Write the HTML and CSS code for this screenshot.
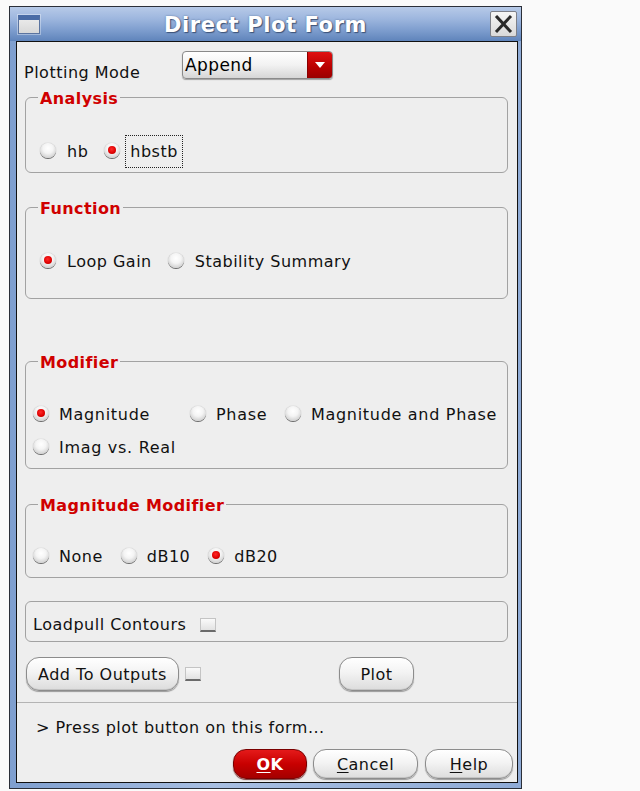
FILE: index.html
```html
<!DOCTYPE html>
<html>
<head>
<meta charset="utf-8">
<link rel="stylesheet" href="styles.css">
</head>
<body>
<div class="window">
  <div class="titlebar">
    <span class="win-icon"></span>
    <span class="title">Direct Plot Form</span>
    <span class="close"><svg width="25" height="24" viewBox="0 0 25 24"><path d="M6 5 L19 19 M19 5 L6 19" stroke="#2a2a2a" stroke-width="3" stroke-linecap="square" fill="none"/></svg></span>
  </div>
  <div class="content">
    <div class="mode-row">
      <span class="mode-label">Plotting Mode</span>
      <div class="select"><span class="select-text">Append</span><span class="select-arrow"></span></div>
    </div>

    <fieldset class="group g-analysis">
      <legend>Analysis</legend>
      <div class="row">
        <span class="opt"><span class="radio"></span><span class="lbl">hb</span></span>
        <span class="opt"><span class="radio on"></span><span class="lbl focus">hbstb</span></span>
      </div>
    </fieldset>

    <fieldset class="group g-function">
      <legend>Function</legend>
      <div class="row">
        <span class="opt"><span class="radio on"></span><span class="lbl">Loop Gain</span></span>
        <span class="opt"><span class="radio"></span><span class="lbl">Stability Summary</span></span>
      </div>
    </fieldset>

    <fieldset class="group g-modifier">
      <legend>Modifier</legend>
      <div class="grid">
        <span class="opt"><span class="radio on"></span><span class="lbl">Magnitude</span></span>
        <span class="opt"><span class="radio"></span><span class="lbl">Phase</span></span>
        <span class="opt"><span class="radio"></span><span class="lbl">Magnitude and Phase</span></span>
        <span class="opt"><span class="radio"></span><span class="lbl">Imag vs. Real</span></span>
      </div>
    </fieldset>

    <fieldset class="group g-magmod">
      <legend>Magnitude Modifier</legend>
      <div class="row tight">
        <span class="opt"><span class="radio"></span><span class="lbl">None</span></span>
        <span class="opt"><span class="radio"></span><span class="lbl">dB10</span></span>
        <span class="opt"><span class="radio on"></span><span class="lbl">dB20</span></span>
      </div>
    </fieldset>

    <div class="box loadpull">
      <span class="lbl">Loadpull Contours</span><span class="check"></span>
    </div>

    <div class="action-row">
      <span class="btn btn-add">Add To Outputs</span><span class="check small"></span>
      <span class="btn btn-plot">Plot</span>
    </div>

    <div class="separator"></div>

    <div class="status">&gt; Press plot button on this form...</div>

    <div class="footer">
      <span class="btn btn-ok"><u>O</u>K</span>
      <span class="btn btn-cancel"><u>C</u>ancel</span>
      <span class="btn btn-help"><u>H</u>elp</span>
    </div>
  </div>
</div>
</body>
</html>
```

FILE: styles.css
```css
html, body {
  margin: 0;
  padding: 0;
  background: #fafafa;
}
body {
  font-family: "DejaVu Sans", "Liberation Sans", sans-serif;
  font-size: 16px;
  color: #111;
}
.window {
  box-sizing: border-box;
  width: 513px;
  height: 783px;
  margin: 6px 0 0 9px;
  border: 1px solid #2b2f38;
  background: linear-gradient(90deg, #7f9fcf, #a8bfe2 40%, #8fabd6);
  display: flex;
  flex-direction: column;
}
.titlebar {
  height: 34px;
  flex: none;
  display: grid;
  grid-template-columns: 1fr auto 1fr;
  align-items: center;
  background: linear-gradient(180deg, #b7cae8 0%, #9db6de 35%, #7c9ccd 70%, #5f84bb 100%);
}
.win-icon {
  justify-self: start;
  margin-left: 8px;
  width: 22px;
  height: 19px;
  box-sizing: border-box;
  border: 1px solid #5b74a0;
  border-top: 5px solid #4a6ca6;
  background: linear-gradient(180deg, #e9e9e9, #d8d8d8);
  box-shadow: 0 0 0 1px rgba(255,255,255,0.35);
}
.title {
  font-weight: bold;
  font-size: 21px;
  letter-spacing: 0.6px;
  color: #fff;
  text-shadow: 1px 1px 1px #3c5277, 0 0 2px #5a739c;
  padding-top: 2px;
}
.close {
  justify-self: end;
  margin-right: 4px;
  width: 27px;
  height: 26px;
  box-sizing: border-box;
  border: 1px solid #7d8089;
  border-radius: 2px;
  background: linear-gradient(180deg, #f6f6f6, #d9d9d9);
  display: flex;
  align-items: center;
  justify-content: center;
}
.content {
  box-sizing: border-box;
  height: 742px;
  margin: 0 3px 0 6px;
  border: 1px solid #111;
  background: #eeeeee;
  display: flex;
  flex-direction: column;
}
.mode-row {
  display: flex;
  align-items: flex-start;
  padding: 9px 0 0 7px;
}
.mode-label {
  width: 158px;
  margin-top: 12px;
  letter-spacing: 0.5px;
  line-height: 19px;
}
.select {
  box-sizing: border-box;
  width: 151px;
  height: 28px;
  border: 1px solid #8a8a8a;
  border-radius: 4px;
  background: linear-gradient(180deg, #ffffff 0%, #f2f2f2 50%, #d6d6d6 100%);
  display: flex;
  align-items: stretch;
  overflow: hidden;
  box-shadow: 0 1px 1px #a0a0a0;
}
.select-text {
  flex: 1;
  padding-left: 2px;
  line-height: 27px;
  font-size: 17px;
  letter-spacing: 0.4px;
  color: #000;
}
.select-arrow {
  width: 24px;
  background: linear-gradient(180deg, #e01010, #b80000 60%, #9a0000);
  position: relative;
  border-left: 1px solid #8a0000;
}
.select-arrow::after {
  content: "";
  position: absolute;
  left: 7px;
  top: 10px;
  border-left: 5px solid transparent;
  border-right: 5px solid transparent;
  border-top: 6px solid #fff;
}
.group {
  box-sizing: border-box;
  width: 483px;
  margin: 0 0 0 8px;
  padding: 0;
  border: 1px solid #a2a2a2;
  border-radius: 6px;
  min-width: 0;
}
.group legend {
  margin-left: 12px;
  padding: 4px 2px 0;
  line-height: 18px;
  font-weight: bold;
  font-size: 16px;
  letter-spacing: 0.4px;
  color: #d00000;
}
.g-analysis { margin-top: 4px; padding: 28px 0 5px 0; }
.g-function { margin-top: 23px; padding: 33px 0 27px 0; }
.g-modifier { margin-top: 51px; padding: 32px 0 11px 0; }
.g-magmod { margin-top: 24px; padding: 31px 0 11px 0; }
.g-analysis .row, .g-function .row { padding-left: 14px; }
.g-modifier .grid, .g-magmod .row { padding-left: 7px; }

.row {
  display: flex;
  align-items: center;
  gap: 16px;
}
.row.tight { gap: 18px; }
.grid {
  display: grid;
  grid-template-columns: 157px 95px auto;
  row-gap: 13px;
}
.opt {
  display: flex;
  align-items: center;
  height: 20px;
}
.lbl {
  letter-spacing: 0.5px;
  line-height: 19px;
  white-space: nowrap;
}
.g-modifier .lbl { letter-spacing: 0.7px; }
.opt .radio + .lbl { margin-left: 10px; }
.g-analysis .opt .radio + .lbl, .g-function .opt .radio + .lbl { margin-left: 11px; }
.lbl.focus {
  margin-left: 5px !important;
  padding: 6px 4px;
  border: 1px dotted #222;
}
.g-analysis .opt { height: 31px; }
.radio {
  flex: none;
  width: 16px;
  height: 15px;
  border-radius: 50%;
  background: radial-gradient(circle at 50% 35%, #ffffff 0%, #f4f4f4 40%, #d2d2d2 75%, #a8a8a8 100%);
  box-shadow: 0 1px 0 #6a6a6a, 0 0 1px #999;
  position: relative;
  margin-top: -2px;
}
.radio.on::after {
  content: "";
  position: absolute;
  left: 4px;
  top: 3px;
  width: 8px;
  height: 8px;
  border-radius: 50%;
  background: radial-gradient(circle at 45% 40%, #ff2a2a 0%, #dd0000 60%, #a00000 100%);
}
.box {
  box-sizing: border-box;
  width: 483px;
  height: 41px;
  margin: 23px 0 0 8px;
  border: 1px solid #a2a2a2;
  border-radius: 6px;
  display: flex;
  align-items: center;
  padding: 6px 0 0 7px;
}
.check {
  display: inline-block;
  box-sizing: border-box;
  width: 16px;
  height: 14px;
  margin-left: 14px;
  background: linear-gradient(180deg, #fafafa, #e2e2e2);
  border: 1px solid #c4c4c4;
  border-bottom: 2px solid #6a6a6a;
}
.check.small { margin-left: 6px; }
.action-row {
  display: flex;
  align-items: center;
  margin-top: 15px;
  padding-left: 9px;
}
.btn {
  box-sizing: border-box;
  display: inline-flex;
  align-items: center;
  justify-content: center;
  height: 34px;
  border: 1px solid #8c8c8c;
  border-radius: 13px;
  background: linear-gradient(180deg, #ffffff 0%, #f3f3f3 45%, #dcdcdc 100%);
  box-shadow: inset 0 -1px 0 #c4c4c4, 0 1px 1px #9a9a9a;
  letter-spacing: 0.5px;
  color: #111;
}
.btn-add { width: 153px; }
.btn-plot { width: 75px; margin-left: 138px; }
.separator {
  margin-top: 11px;
  border-top: 1px solid #b4b4b4;
}
.status {
  margin-top: 15px;
  padding-left: 19px;
  line-height: 19px;
  letter-spacing: 0.5px;
}
.footer {
  margin-top: auto;
  margin-bottom: 3px;
  display: flex;
  justify-content: flex-end;
  gap: 6px;
  padding-right: 4px;
}
.footer .btn { height: 30px; border-radius: 13px; }
.btn u { text-decoration-thickness: 1px; text-underline-offset: 2px; }
.btn-ok {
  width: 74px;
  background: linear-gradient(180deg, #e41a1a 0%, #c80000 50%, #a40000 100%);
  border-color: #7a0000;
  box-shadow: 0 1px 1px #7a3a3a;
  color: #fff;
  font-weight: bold;
}
.btn-cancel { width: 105px; }
.btn-help { width: 88px; margin-left: 1px; }
```
